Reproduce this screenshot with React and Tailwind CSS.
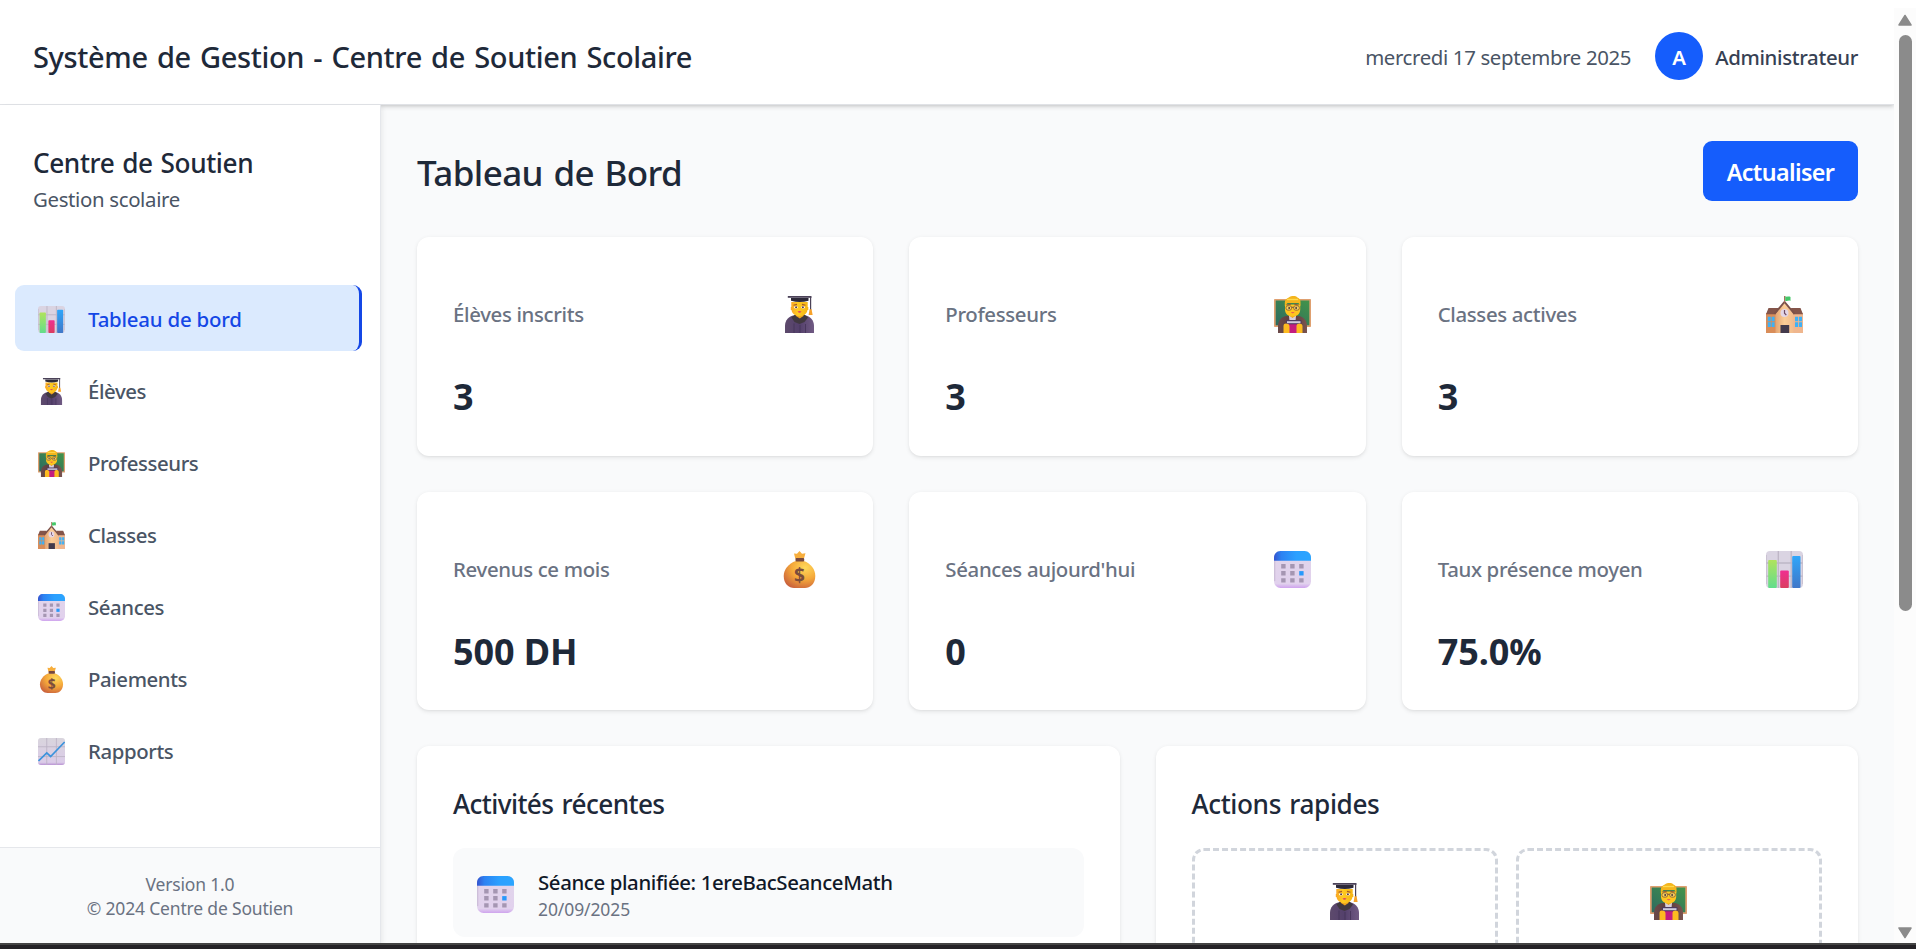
import React from "react";

function BarChartIcon({ className }) {
  return (
    <svg viewBox="0 0 37 37" className={className}>
      <defs>
        <linearGradient id="barGreen" x1="0" y1="0" x2="0" y2="1"><stop offset="0" stopColor="#b0e35c" /><stop offset="1" stopColor="#62dd8c" /></linearGradient>
        <linearGradient id="barPink" x1="0" y1="0" x2="0" y2="1"><stop offset="0" stopColor="#f02f91" /><stop offset="1" stopColor="#da3e60" /></linearGradient>
        <linearGradient id="barBlue" x1="0" y1="0" x2="0" y2="1"><stop offset="0" stopColor="#2fa6fa" /><stop offset="1" stopColor="#4077c8" /></linearGradient>
      </defs>
      <rect width="37" height="37" rx="4" fill="#dad4e2" />
      <path d="M12.3 0v37M25.2 0v37M0 12h37M0 25.2h37" stroke="#bdb6c6" strokeWidth="1.3" />
      <path d="M0 4v29M37 4v29" stroke="#c5bccd" strokeWidth="1.5" />
      <rect x="2.2" y="9" width="8.6" height="28" rx="1" fill="url(#barGreen)" />
      <rect x="14.2" y="19.5" width="8.6" height="17.5" rx="1" fill="url(#barPink)" />
      <rect x="26.2" y="5" width="8.3" height="32" rx="1" fill="url(#barBlue)" />
    </svg>
  );
}

function StudentIcon({ className }) {
  return (
    <svg viewBox="0 0 37 37" className={className}>
      <defs>
        <linearGradient id="robe" x1="0" x2="1"><stop offset="0" stopColor="#5d4a6c" /><stop offset="0.5" stopColor="#54406c" /><stop offset="1" stopColor="#705a83" /></linearGradient>
        <linearGradient id="studentFace" x1="0" x2="1"><stop offset="0" stopColor="#f9a526" /><stop offset="0.4" stopColor="#ffcb21" /><stop offset="1" stopColor="#f5b313" /></linearGradient>
      </defs>
      <path d="M4 37v-7c0-6 4-10 9-10.500h11c5 .5 9 4.500 9 10.500v7z" fill="url(#robe)" />
      <path d="M13 27.500v9.500M19 29v8M24.500 28v9" stroke="#46365a" strokeWidth=".9" />
      <path d="M10.500 21.500 14 18.500h9.500l3.500 3-3.500 4.500-5 2-5-2z" fill="#40383f" />
      <path d="M15 17h7.500v3l-3.700 2.600-3.800-2.600z" fill="#f0a51d" />
      <path d="M10.300 6h16.400v5h.6v3h-.8c-.7 4-4.200 6.200-8 6.200s-7.300-2.200-8-6.200h-.7v-3h.5z" fill="url(#studentFace)" />
      <path d="M12.500 9.300 16 8.400M21 8.400l3.500.9" stroke="#a4592b" strokeWidth="1.100" />
      <ellipse cx="14.900" cy="11.200" rx="1.700" ry="1.300" fill="#fff" /><ellipse cx="22.100" cy="11.200" rx="1.700" ry="1.300" fill="#fff" />
      <circle cx="15.100" cy="11.200" r="1.050" fill="#5b3a45" /><circle cx="21.900" cy="11.200" r="1.050" fill="#5b3a45" />
      <path d="M16.500 15.400q2-.8 4 0-2 2.500-4 0z" fill="#e04461" />
      <path d="M10 2h17.500v2.700q-8.700 2.600-17.500 0z" fill="#2d2938" />
      <path d="M6.800 0h23.700v1.800H6.800z" fill="#4b4258" />
      <path d="M29.600 1v13" stroke="#4b4258" strokeWidth="1.200" />
      <path d="M28.600 13.300h2l1 5.700h-4z" fill="#f7a22a" />
    </svg>
  );
}

function TeacherIcon({ className }) {
  return (
    <svg viewBox="0 0 37 37" className={className}>
      <defs>
        <linearGradient id="board" x1="0" y1="1" x2="1" y2="0"><stop offset="0" stopColor="#2c6a60" /><stop offset="1" stopColor="#43944a" /></linearGradient>
        <linearGradient id="coat" x1="0" x2="1"><stop offset="0" stopColor="#6b4a49" /><stop offset="0.5" stopColor="#5a3c3d" /><stop offset="1" stopColor="#7b5550" /></linearGradient>
      </defs>
      <rect y="3" width="37" height="28" rx=".8" fill="#dfa070" />
      <rect x="1.700" y="4.500" width="33.600" height="24.800" fill="url(#board)" />
      <path d="M4 37v-7c0-6 4-9.500 8.500-10h12c4.500.5 8.500 4 8.500 10v7z" fill="url(#coat)" />
      <path d="M15 20h7l-.5 5h-6z" fill="#d7cfdc" />
      <path d="M15 17h7v2.500l-3.500 2.500-3.500-2.500z" fill="#eaa118" />
      <path d="M11 8.500h15.200v5c0 4.500-3.400 7-7.600 7s-7.600-2.500-7.600-7z" fill="#fec51f" />
      <path d="M10.800 10V6.500c0-2.500 2-4.500 4-5C16 .3 18 0 19.500 0s3 .4 4 1.500c2 .5 3 2.500 3 4.500v4l-2-3h-11z" fill="#f4b51d" />
      <path d="M13 3.500h11" stroke="#ffd94b" strokeWidth="1.300" />
      <path d="M12.600 9.300 17 8M20.200 8l4.200 1.300" stroke="#9b5735" strokeWidth="1.100" />
      <g fill="#fbd25c" stroke="#7b5638" strokeWidth=".8"><rect x="12" y="9.800" width="5.600" height="4.300" rx="1.900" /><rect x="19.700" y="9.800" width="5.600" height="4.300" rx="1.900" /></g>
      <path d="M17.600 11.300h2.100" stroke="#6b4b3b" strokeWidth=".9" />
      <circle cx="15.200" cy="11.900" r="1" fill="#493b40" /><circle cx="22.100" cy="11.900" r="1" fill="#493b40" />
      <path d="M16.800 16.200h3.800q-1.900 2.300-3.800 0z" fill="#e04461" />
      <rect x="12" y="24" width="15.500" height="13" rx=".8" fill="#4d3b61" />
      <path d="M13 25.200h13.500v2H13z" fill="#cfcbdc" />
      <path d="M12.500 28.300h14.500V37H12.500z" fill="#c41d7f" />
      <path d="M9.500 30c0-1.700 1-2.500 2.500-2.500s3.500.8 3.500 2.500v7h-6zM22.500 30c0-1.700 1.700-2.500 3-2.500s3 .8 3 2.500v7h-6z" fill="#fdbb20" />
    </svg>
  );
}

function SchoolIcon({ className }) {
  return (
    <svg viewBox="0 0 37 37" className={className}>
      <defs>
        <linearGradient id="facade" x1="0" x2="1"><stop offset="0" stopColor="#e4a573" /><stop offset="0.5" stopColor="#fbcd97" /><stop offset="1" stopColor="#f1bb8d" /></linearGradient>
      </defs>
      <path d="M0 17h10v20H0z" fill="#d98d59" />
      <path d="M27 17h10v20H27z" fill="#efb68e" />
      <path d="M2.500 12h9.500v6.200H0zM25 12h9.500l2.500 6.200H26z" fill="#84554a" />
      <path d="M9.500 17.500 18.500 7l9 10.500V37h-18z" fill="url(#facade)" />
      <path d="M8.500 17.800 18.500 6l10 11.800" fill="none" stroke="#7c5148" strokeWidth="1.900" />
      <path d="M18.600 0v6.500" stroke="#a5745d" strokeWidth="1.200" />
      <path d="M19.200.3c2 1 3.300-.5 5.300.6v4c-2-.9-3.300.6-5.300-.2z" fill="#45c768" />
      <circle cx="18.500" cy="17" r="4" fill="#e3d6e7" /><path d="M18.500 14v3.200l1.800 2" fill="none" stroke="#714b62" strokeWidth="1.200" />
      <path d="M14.500 31V29h8.700v8h-8.700z" fill="#433a4c" />
      <g fill="#3fb1f5"><path d="M1.800 20.800h3v4.500h-3zM5.600 20.800h3v4.500h-3zM1.800 26.300h3v4.700h-3zM5.600 26.300h3v4.700h-3zM29 20.800h3.200v4.500H29zM33 20.800h3v4.500h-3zM29 26.300h3.200v4.700H29zM33 26.300h3v4.700h-3z" /></g>
    </svg>
  );
}

function CalendarIcon({ className }) {
  return (
    <svg viewBox="0 0 37 37" className={className}>
      <defs>
        <linearGradient id="calTop" x1="0" y1="0" x2="1" y2="0"><stop offset="0" stopColor="#3454cf" /><stop offset="0.2" stopColor="#2c82f2" /><stop offset="0.6" stopColor="#2ba0ff" /><stop offset="1" stopColor="#2ba5ff" /></linearGradient>
        <linearGradient id="calBody" x1="0" y1="0" x2="0" y2="1"><stop offset="0" stopColor="#e1d5ea" /><stop offset="0.88" stopColor="#e1d1ed" /><stop offset="1" stopColor="#cfa3ee" /></linearGradient>
      </defs>
      <rect width="37" height="37" rx="6.500" fill="url(#calBody)" />
      <path d="M0 9.700V6.500C0 2.900 2.900 0 6.500 0h24C34.100 0 37 2.900 37 6.500v3.200z" fill="url(#calTop)" />
      <path d="M.7 10v20" stroke="#cbbdd8" strokeWidth="1.200" />
      <g fill="#a596b2">
        <path d="M7.200 13h4.400v4.400H7.200zM16.200 13h4.400v4.400h-4.400zM25.200 13h4.400v4.400h-4.400zM7.200 20.100h4.400v4.400H7.200zM16.200 20.100h4.400v4.400h-4.400zM7.200 27.200h4.400v4.400H7.200zM16.200 27.200h4.400v4.400h-4.400zM25.200 27.200h4.400v4.400h-4.400z" />
      </g>
      <path d="M25.200 20.100h4.400v4.400h-4.400z" fill="#2899fb" />
    </svg>
  );
}

function MoneyBagIcon({ className }) {
  return (
    <svg viewBox="0 0 37 37" className={className}>
      <defs>
        <radialGradient id="bag" cx="0.68" cy="0.25" r="0.85"><stop offset="0" stopColor="#ffd95a" /><stop offset="0.5" stopColor="#f5a93a" /><stop offset="1" stopColor="#c9603c" /></radialGradient>
      </defs>
      <path d="M13 2.500 16 2.800 18.500 0l2.500 2.800 3.500-.5-1.600 5.500h-8.600z" fill="#f7ae3d" />
      <path d="M14.800 10h8C30 12.500 34.300 18.500 34.300 25c0 8-5.300 12-10.300 12H13C8 37 2.700 33 2.700 25c0-6.500 4.900-12.500 12.100-15z" fill="url(#bag)" />
      <rect x="14.500" y="7" width="8.700" height="3.500" rx="1" fill="#76483e" />
      <text x="18.500" y="31" textAnchor="middle" fontFamily="Noto Sans, sans-serif" fontWeight="700" fontSize="19" fill="#7a4c3c">$</text>
    </svg>
  );
}

function LineChartIcon({ className }) {
  return (
    <svg viewBox="0 0 37 37" className={className}>
      <defs>
        <linearGradient id="lineBg" x1="0" y1="0" x2="0" y2="1"><stop offset="0" stopColor="#d9d5dd" /><stop offset="0.9" stopColor="#dbcce8" /><stop offset="1" stopColor="#b993d4" /></linearGradient>
      </defs>
      <rect width="37" height="37" rx="4" fill="url(#lineBg)" />
      <path d="M12 0v37M25.200 0v37M0 12h37M0 25.500h37" stroke="#bdb4c6" strokeWidth="1.200" />
      <path d="M.7 31.500 12 20.300l5.300 5L36.500 5.500" fill="none" stroke="#3b93dc" strokeWidth="2.300" />
    </svg>
  );
}

const navItems = [
  { label: "Tableau de bord", Icon: BarChartIcon, active: true },
  { label: "Élèves", Icon: StudentIcon },
  { label: "Professeurs", Icon: TeacherIcon },
  { label: "Classes", Icon: SchoolIcon },
  { label: "Séances", Icon: CalendarIcon },
  { label: "Paiements", Icon: MoneyBagIcon },
  { label: "Rapports", Icon: LineChartIcon },
];

const stats = [
  { label: "Élèves inscrits", value: "3", Icon: StudentIcon },
  { label: "Professeurs", value: "3", Icon: TeacherIcon },
  { label: "Classes actives", value: "3", Icon: SchoolIcon },
  { label: "Revenus ce mois", value: "500 DH", Icon: MoneyBagIcon },
  { label: "Séances aujourd'hui", value: "0", Icon: CalendarIcon },
  { label: "Taux présence moyen", value: "75.0%", Icon: BarChartIcon },
];

const CARD = "rounded-xl bg-white shadow-[0_1.5px_4.5px_rgba(0,0,0,0.08),0_1.5px_3px_-1.5px_rgba(0,0,0,0.08)]";

function Header() {
  return (
    <header className="relative z-10 flex h-[97px] shrink-0 items-center justify-between border-b border-[#e0e2e6] bg-white pl-[33px] pr-9 shadow-[0_1.5px_4.5px_rgba(0,0,0,0.14),0_1.5px_3px_-1.5px_rgba(0,0,0,0.12)]">
      <h1 className="pt-0.5 text-[29px] font-medium leading-[42px] tracking-[-0.36px] [word-spacing:2px] text-[#1e2939]">Système de Gestion - Centre de Soutien Scolaire</h1>
      <div className="flex items-center">
        <span className="mr-6 pt-0.5 text-[20.4px] tracking-[-0.36px] text-[#4a5565]">mercredi 17 septembre 2025</span>
        <div className="mr-3 flex size-12 items-center justify-center rounded-full bg-[#155dfc] pt-0.5 text-[20.4px] font-semibold text-white">A</div>
        <span className="pt-0.5 text-[20.4px] font-medium tracking-[-0.34px] text-[#364153]">Administrateur</span>
      </div>
    </header>
  );
}

function Sidebar() {
  return (
    <aside className="relative z-20 flex w-[381px] shrink-0 flex-col border-r border-[#e5e7eb] bg-white shadow-[1.5px_1.5px_4.5px_rgba(0,0,0,0.06)]">
      <div className="px-[33px] pt-[37px]">
        <h2 className="h-[42px] text-[26.2px] font-medium leading-[42px] tracking-[-0.4px] [word-spacing:1.5px] text-[#1e2939]">Centre de Soutien</h2>
        <p className="h-[30px] text-[20.4px] leading-[30px] tracking-[-0.34px] text-[#4a5565]">Gestion scolaire</p>
      </div>
      <nav className="mt-[71px] flex flex-1 flex-col gap-1.5 pl-[15px] pr-[18px]">
        {navItems.map(({ label, Icon, active }) => (
          <a
            key={label}
            className={
              active
                ? "flex h-[66px] items-center gap-[23px] rounded-[9px] border-r-[3px] border-[#1447e6] bg-[#dbeafe] pl-[23px] tracking-[-0.2px] text-[#1447e6]"
                : "flex h-[66px] items-center gap-[23px] rounded-[9px] pl-[23px] tracking-[-0.42px] text-[#4a5565]"
            }
          >
            <Icon className="mt-0.5 size-[27px]" />
            <span className="pt-0.5 text-[20.4px] font-medium leading-[30px]">{label}</span>
          </a>
        ))}
      </nav>
      <div className="h-24 border-t border-[#e5e7eb] bg-[#f9fafb] pt-6 text-center text-[17.5px] leading-6 tracking-[-0.18px] text-[#6a7282]">
        <p>Version 1.0</p>
        <p>© 2024 Centre de Soutien</p>
      </div>
    </aside>
  );
}

function StatCard({ label, value, Icon }) {
  return (
    <div className={`${CARD} h-[218.5px] px-9 pt-9`}>
      <div className="flex h-[83px] items-center justify-between pr-[19px]">
        <span className="text-[20.4px] font-medium tracking-[-0.34px] text-[#6a7282]">{label}</span>
        <Icon className="size-[37px]" />
      </div>
      <p className="mt-3.5 text-[36px] font-bold leading-[54px] tracking-[-0.1px] text-[#1e2939]">{value}</p>
    </div>
  );
}

function QuickAction({ Icon }) {
  return (
    <button className="flex h-[150px] flex-col items-center rounded-xl border-[3px] border-dashed border-[#d1d5dc] pt-8">
      <Icon className="size-[37px]" />
    </button>
  );
}

function Dashboard() {
  return (
    <main className="flex-1 overflow-hidden bg-[#f9fafb] p-9">
      <div className="mb-9 flex h-[60px] items-center justify-between">
        <h2 className="pt-1 text-[35px] font-medium leading-[48px] tracking-[-0.6px] [word-spacing:2px] text-[#1e2939]">Tableau de Bord</h2>
        <button className="h-[60px] w-[155px] rounded-[9px] bg-[#155dfc] pt-0.5 text-[23.3px] font-semibold leading-[58px] tracking-[-0.6px] text-white">Actualiser</button>
      </div>
      <div className="grid grid-cols-3 gap-9">
        {stats.map((s) => (
          <StatCard key={s.label} {...s} />
        ))}
      </div>
      <div className="mt-9 grid grid-cols-2 gap-9">
        <section className={`${CARD} h-[400px] p-9`}>
          <h3 className="mb-[23px] h-[43px] text-[26.2px] font-medium leading-[45px] tracking-[-0.6px] [word-spacing:2px] text-[#1e2939]">Activités récentes</h3>
          <div className="flex h-[89px] items-center gap-6 rounded-xl bg-[#f9fafb] px-6">
            <CalendarIcon className="mt-1 size-[37px]" />
            <div className="pt-0.5">
              <p className="text-[20.4px] font-medium leading-[30px] tracking-[-0.38px] text-[#101828]">Séance planifiée: 1ereBacSeanceMath</p>
              <p className="text-[17.5px] leading-6 tracking-[-0.1px] text-[#6a7282]">20/09/2025</p>
            </div>
          </div>
        </section>
        <section className={`${CARD} h-[400px] p-9`}>
          <h3 className="mb-[23px] h-[43px] text-[26.2px] font-medium leading-[45px] tracking-[-0.4px] [word-spacing:2px] text-[#1e2939]">Actions rapides</h3>
          <div className="grid grid-cols-2 gap-[18px]">
            <QuickAction Icon={StudentIcon} />
            <QuickAction Icon={TeacherIcon} />
          </div>
        </section>
      </div>
    </main>
  );
}

function Scrollbar() {
  return (
    <div className="flex w-[22px] shrink-0 flex-col items-center justify-between bg-[#fcfcfc] pb-1 pt-1.5">
      <div className="flex flex-col items-center gap-[9px]">
        <svg viewBox="0 0 14 12" className="h-3 w-3.5"><path d="M7 1.500 13 11H1z" fill="#8b8b8b" stroke="#8b8b8b" strokeWidth="1.500" strokeLinejoin="round" /></svg>
        <div className="h-[576px] w-[13px] rounded-full bg-[#8b8b8b]" />
      </div>
      <svg viewBox="0 0 14 12" className="h-3 w-3.5"><path d="M7 10.500 1 1h12z" fill="#8b8b8b" stroke="#8b8b8b" strokeWidth="1.500" strokeLinejoin="round" /></svg>
    </div>
  );
}

export default function App() {
  return (
    <div className="flex h-[949px] w-full flex-col overflow-hidden bg-white font-['Noto_Sans','Open_Sans',sans-serif]">
      <div className="h-2 shrink-0 bg-white" />
      <div className="flex min-h-0 flex-1 overflow-hidden">
        <div className="flex min-w-0 flex-1 flex-col overflow-hidden">
          <Header />
          <div className="flex min-h-0 flex-1">
            <Sidebar />
            <Dashboard />
          </div>
        </div>
        <Scrollbar />
      </div>
      <div className="h-1.5 shrink-0 border-t-2 border-[#444444] bg-[#242226]" />
    </div>
  );
}
